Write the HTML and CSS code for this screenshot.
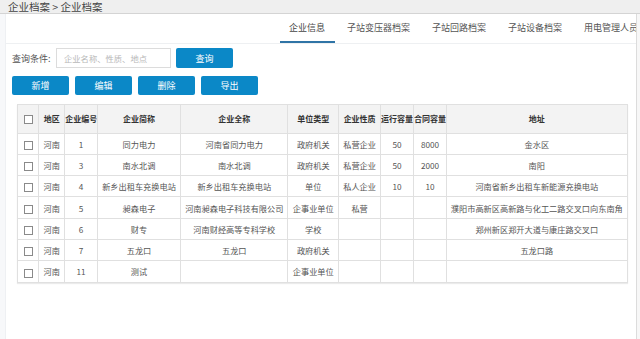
FILE: index.html
```html
<!DOCTYPE html>
<html>

<head>
    <meta charset='utf-8'>
    <title>企业档案</title>
    <meta name='viewport' content='width=device-width, initial-scale=1'>
    <link rel="stylesheet" href="styles.css">
</head>

<body>
    <div class="crumb">企业档案 &gt; 企业档案</div>
    <div class="frame">
        <div class="side"></div>
        <div class="content">
            <div class="tabs">
                <span class="tab active">企业信息</span>
                <span class="tab">子站变压器档案</span>
                <span class="tab">子站回路档案</span>
                <span class="tab">子站设备档案</span>
                <span class="tab">用电管理人员</span>
            </div>

            <form class="search">
                <label class="search-label" for="keyword">查询条件:</label>
                <input id="keyword" class="search-input" type="text" placeholder="企业名称、性质、地点" />
                <button type="button" class="btn">查询</button>
            </form>

            <div class="actions">
                <button type="button" class="btn">新增</button>
                <button type="button" class="btn">编辑</button>
                <button type="button" class="btn">删除</button>
                <button type="button" class="btn">导出</button>
            </div>

            <table class="grid">
                <colgroup>
                    <col style="width:21px">
                    <col style="width:26px">
                    <col style="width:32.4px">
                    <col style="width:83.6px">
                    <col style="width:107px">
                    <col style="width:51px">
                    <col style="width:41.7px">
                    <col style="width:33px">
                    <col style="width:33px">
                    <col style="width:180.7px">
                </colgroup>
                <thead>
                    <tr>
                        <th><span class="check"></span></th>
                        <th>地区</th>
                        <th>企业编号</th>
                        <th>企业简称</th>
                        <th>企业全称</th>
                        <th>单位类型</th>
                        <th>企业性质</th>
                        <th>运行容量</th>
                        <th>合同容量</th>
                        <th>地址</th>
                    </tr>
                </thead>
                <tbody>
                    <tr>
                        <td><span class="check"></span></td>
                        <td>河南</td><td>1</td><td>同力电力</td><td>河南省同力电力</td>
                        <td>政府机关</td><td>私营企业</td><td>50</td><td>8000</td><td>金水区</td>
                    </tr>
                    <tr>
                        <td><span class="check"></span></td>
                        <td>河南</td><td>3</td><td>南水北调</td><td>南水北调</td>
                        <td>政府机关</td><td>私营企业</td><td>50</td><td>2000</td><td>南阳</td>
                    </tr>
                    <tr>
                        <td><span class="check"></span></td>
                        <td>河南</td><td>4</td><td>新乡出租车充换电站</td><td>新乡出租车充换电站</td>
                        <td>单位</td><td>私人企业</td><td>10</td><td>10</td><td>河南省新乡出租车新能源充换电站</td>
                    </tr>
                    <tr>
                        <td><span class="check"></span></td>
                        <td>河南</td><td>5</td><td>昶森电子</td><td>河南昶森电子科技有限公司</td>
                        <td>企事业单位</td><td>私营</td><td></td><td></td><td>濮阳市高新区高新路与化工二路交叉口向东南角</td>
                    </tr>
                    <tr>
                        <td><span class="check"></span></td>
                        <td>河南</td><td>6</td><td>财专</td><td>河南财经高等专科学校</td>
                        <td>学校</td><td></td><td></td><td></td><td>郑州新区郑开大道与康庄路交叉口</td>
                    </tr>
                    <tr>
                        <td><span class="check"></span></td>
                        <td>河南</td><td>7</td><td>五龙口</td><td>五龙口</td>
                        <td>政府机关</td><td></td><td></td><td></td><td>五龙口路</td>
                    </tr>
                    <tr>
                        <td><span class="check"></span></td>
                        <td>河南</td><td>11</td><td>测试</td><td></td>
                        <td>企事业单位</td><td></td><td></td><td></td><td></td>
                    </tr>
                </tbody>
            </table>
        </div>
        <div class="edge"></div>
    </div>
</body>

</html>
```

FILE: styles.css
```css
body {
    margin: 0;
    height: 100vh;
    overflow: hidden;
    font-family: "Noto Sans CJK SC", "Noto Sans", sans-serif;
    color: #555;
}

.crumb {
    height: 13px;
    line-height: 13px;
    padding-left: 8px;
    font-size: 10.5px;
    color: #444;
    background-color: #efefef;
    border-bottom: 1px solid #d4d4d4;
}

.frame {
    display: flex;
    height: calc(100vh - 14px);
}

.side {
    width: 5px;
    background-color: #f7f8fa;
    border-right: 1px solid #eef0f3;
}

.content {
    flex: 1;
    overflow: hidden;
    background-color: white;
}

.edge {
    width: 3px;
    background-color: #f7f7f7;
    border-left: 1px solid #dcdcdc;
}

.tabs {
    display: flex;
    gap: 3px;
    height: 29px;
    padding-left: 273.5px;
    border-bottom: 1px solid #eef0f2;
    white-space: nowrap;
}

.tab {
    padding: 0 9.5px;
    line-height: 27px;
    font-size: 9px;
    color: #555;
    border-bottom: 2px solid transparent;
}

.tab.active {
    color: #444;
    border-bottom-color: #2f74a6;
}

.search {
    display: flex;
    align-items: center;
    margin: 4px 0 0 6px;
}

.search-label {
    width: 44px;
    font-size: 9px;
    color: #555;
}

.search-input {
    box-sizing: border-box;
    width: 115px;
    height: 20px;
    margin: 0 5px 0 0;
    padding: 0 0 0 7px;
    border: 1px solid #dcdcdc;
    font-family: inherit;
    font-size: 8.3px;
    outline: none;
}

.search-input::placeholder {
    color: #b8b8b8;
}

.btn {
    width: 57px;
    height: 20px;
    padding: 0;
    border: none;
    border-radius: 2px;
    background-color: #0b88c7;
    color: white;
    font-family: inherit;
    font-size: 9px;
}

.actions {
    display: flex;
    gap: 6px;
    margin: 8px 0 0 6px;
}

.actions .btn {
    height: 19px;
}

.grid {
    margin: 8.5px 0 0 11.3px;
    width: 609.4px;
    table-layout: fixed;
    border-collapse: collapse;
    border: 1px solid #d2d2d2;
    box-shadow: 0 1px 1px rgba(0, 0, 0, 0.08);
}

.grid th,
.grid td {
    padding: 0;
    border: 1px solid #e0e0e0;
    text-align: center;
    white-space: nowrap;
    overflow: hidden;
}

.grid th {
    height: 28px;
    font-size: 8px;
    font-weight: bold;
    color: #333;
    background-color: #f3f3f3;
}

.grid td {
    height: 20.3px;
    font-size: 8.2px;
    color: #555;
}

.check {
    display: inline-block;
    width: 7px;
    height: 7px;
    border: 1px solid #8a8a8a;
    background-color: white;
    vertical-align: middle;
}
```
